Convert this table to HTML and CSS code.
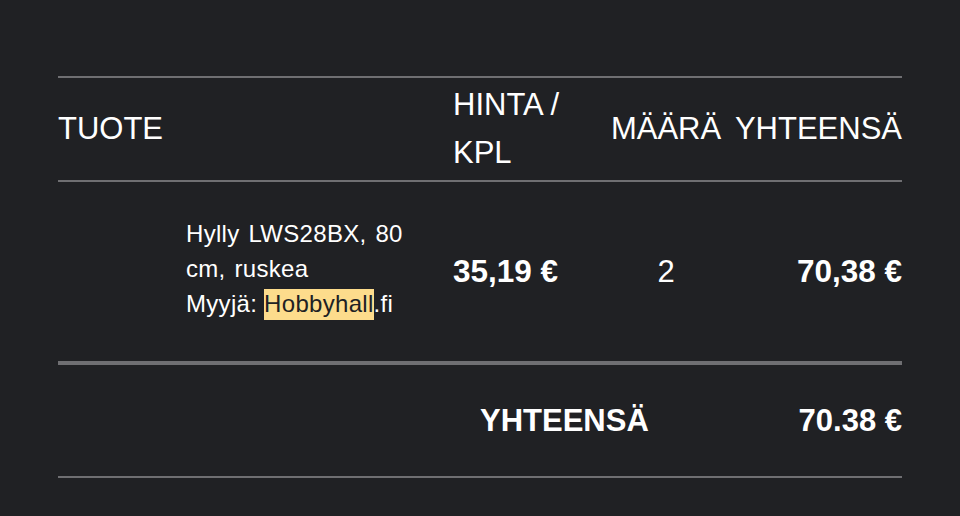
FILE: index.html
```html
<!DOCTYPE html>
<html lang="fi">
<head>
<meta charset="utf-8">
<link rel="stylesheet" href="styles.css">
</head>
<body>
<div class="cart">
  <div class="row head">
    <div class="cell img">TUOTE</div>
    <div class="cell desc"></div>
    <div class="cell price">HINTA / KPL</div>
    <div class="cell qty">MÄÄRÄ</div>
    <div class="cell total">YHTEENSÄ</div>
  </div>
  <div class="row item">
    <div class="cell img"></div>
    <div class="cell desc">
      <div class="name">Hylly LWS28BX, 80 cm, ruskea</div>
      <div class="seller">Myyjä: <mark class="hl">Hobbyhall</mark>.fi</div>
    </div>
    <div class="cell price bold">35,19 €</div>
    <div class="cell qty">2</div>
    <div class="cell total bold">70,38 €</div>
  </div>
  <div class="row foot">
    <div class="cell img"></div>
    <div class="cell desc"></div>
    <div class="cell label bold">YHTEENSÄ</div>
    <div class="cell total bold">70.38 €</div>
  </div>
</div>
</body>
</html>
```
FILE: styles.css
```css
html, body {
  margin: 0;
  padding: 0;
  background: #202124;
}
body {
  font-family: "Liberation Sans", Arial, sans-serif;
  color: #ffffff;
  font-size: 31px;
}
.cart {
  width: 844px;
  margin: 76px 0 0 58px;
  border-top: 2px solid #6f6f72;
}
.row {
  display: grid;
  grid-template-columns: 128px 267px 153px 120px 176px;
  align-items: center;
}
.head {
  height: 102px;
  border-bottom: 2px solid #6f6f72;
  line-height: 48px;
}
.item {
  height: 179px;
  border-bottom: 4px solid #6f6f72;
}
.foot {
  height: 111px;
  border-bottom: 2px solid #6f6f72;
}
.head .img {
  white-space: nowrap;
}
.qty {
  text-align: center;
}
.total {
  text-align: right;
}
.bold {
  font-weight: bold;
  font-size: 31.5px;
}
.foot .bold {
  font-size: 31px;
}
.desc {
  font-size: 24px;
  line-height: 35px;
  letter-spacing: 0.3px;
  padding-right: 18px;
}
.item .desc {
  padding-bottom: 6px;
}
.name {
  word-spacing: 2px;
}
.hl {
  background: #fddc8c;
  color: #202124;
  padding: 1px 0 3px;
}
.foot .label {
  grid-column: 3 / span 2;
  padding-left: 27px;
}
```
